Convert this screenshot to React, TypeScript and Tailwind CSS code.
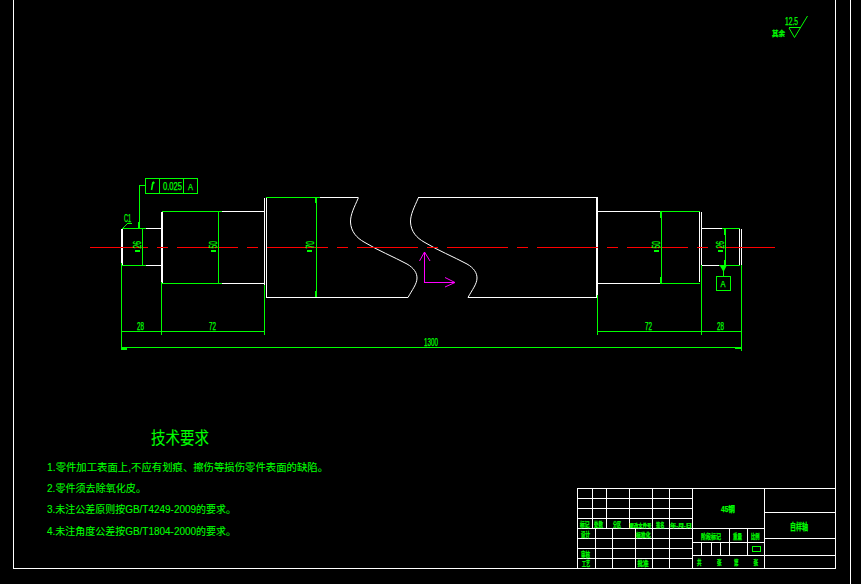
import React from "react";

const GREEN = "#00ff00";
const WHITE = "#ffffff";
const RED = "#ff0000";
const MAGENTA = "#ff00ff";

interface LabelProps {
  x: number;
  y: number;
  w: number;
  size?: number;
  bold?: boolean;
  thin?: boolean;
  rotate?: boolean;
  children: string;
}

// text squeezed to the width it has in the drawing
const Label: React.FC<LabelProps> = ({ x, y, w, size = 9, bold, thin, rotate, children }) => (
  <text
    x={rotate ? 0 : x}
    y={rotate ? 0 : y}
    transform={rotate ? `translate(${x} ${y}) rotate(-90)` : undefined}
    fill={GREEN}
    stroke={GREEN}
    strokeWidth={thin ? 0.08 : 0.25}
    fontSize={size}
    textLength={w}
    lengthAdjust="spacingAndGlyphs"
    className={`font-['Liberation_Sans','Noto_Sans_CJK_SC',sans-serif] ${bold ? "font-bold" : "font-normal"}`}
  >
    {children}
  </text>
);

const redDashes = [
  [90, 148], [157, 168], [177, 238], [247, 258], [267, 328], [337, 348], [357, 418],
  [427, 438], [447, 508], [517, 528], [537, 598], [607, 618], [627, 688], [697, 708], [717, 775],
];

const thick = [
  [121, 229, 2, 36], [161, 212, 2, 72], [596, 197, 2, 101],
];

const arrows = [
  [138, 222, 2, 7], [315, 198, 2, 5], [315, 291, 2, 6], [660, 212, 2, 6], [660, 277, 2, 6],
  [724, 228, 2, 7], [724, 260, 2, 5], [122, 348, 5, 2], [735, 347, 6, 2],
  [135, 250, 5, 2], [211, 250, 5, 2], [307, 250, 5, 2], [654, 250, 5, 2], [718, 250, 5, 2],
];

const titleSmall: [number, number, number, number, string][] = [
  [580, 526.5, 9.5, 6.5, "标记"], [594, 526.5, 9, 6.5, "处数"], [613, 526.5, 8, 6.5, "分区"],
  [629.5, 526.5, 22, 4.5, "更改文件号"], [656, 526.5, 8.5, 6, "签名"], [670, 526.5, 22, 5, "年.月.日"],
  [581, 536.5, 9, 6.5, "设计"], [636, 536.5, 14.5, 6, "标准化"], [581, 556.5, 9, 6.5, "审核"],
  [582, 566, 8, 6.5, "工艺"], [637.5, 566, 11, 6.5, "批准"], [701, 538.5, 20, 6.5, "阶段标记"],
  [733, 538.5, 9, 6.5, "重量"], [751, 538.5, 8.5, 6.5, "比例"], [697, 564.5, 4.5, 6.5, "共"],
  [717, 564.5, 4.5, 6.5, "张"], [734, 564.5, 4.5, 6.5, "第"], [753.5, 564.5, 4.5, 6.5, "张"],
];

const App: React.FC = () => {
  return (
    <div className="w-[861px] h-[584px] bg-black overflow-hidden">
      <svg width="861" height="584" viewBox="0 0 861 584" className="block">
        {/* sheet border */}
        <path d="M13.5 0V568.5H835.5V0M850.5 0V584" stroke={WHITE} fill="none" shapeRendering="crispEdges" />

        {/* shaft outline */}
        <g stroke={WHITE} fill="none" shapeRendering="crispEdges">
          <path d="M146 228.5H162M146 265.5H162" />
          <path d="M222 211.5H265M222 283.5H265" />
          <path d="M264.5 198V285M266.5 198V297" />
          <path d="M320 197.5H358M266 297.5H408M418 197.5H597M468 297.5H597" />
          <path d="M597 211.5H660M597 283.5H660M699.5 212V282M701.5 212V265" />
          <path d="M702 228.5H722M702 265.5H719M739.5 229V265M741.5 229V265" />
        </g>
        {thick.map(([x, y, w, h], i) => (
          <rect key={i} x={x} y={y} width={w} height={h} fill={WHITE} shapeRendering="crispEdges" />
        ))}

        {/* break lines */}
        <g stroke={WHITE} fill="none">
          <path d="M358.5 197.5C354 208 350.5 214 350.5 222C351 232 357 238 364 242C377 250 394 257 407 264C414 268 417 273 417 278C417 284 412 290 408 297.5" />
          <path d="M418.5 197.5C414 208 410.5 214 410.5 222C411 232 417 238 424 242C437 250 454 257 467 264C474 268 477 273 477 278C477 284 472 290 468 297.5" />
        </g>

        {/* center line */}
        {redDashes.map(([a, b]) => (
          <line key={a} x1={a} x2={b} y1={247.5} y2={247.5} stroke={RED} shapeRendering="crispEdges" />
        ))}

        {/* ucs icon */}
        <g stroke={MAGENTA} fill="none">
          <path d="M424.5 252V282.5H455" shapeRendering="crispEdges" />
          <path d="M419.5 261L424.5 252L430 261M445 277.5L455 282.5L445 287" />
        </g>

        {/* dimensions */}
        <g stroke={GREEN} fill="none" shapeRendering="crispEdges">
          <path d="M122 228.5H146M122 265.5H146M142.5 229V265" />
          <path d="M162 211.5H222M162 283.5H222M218.5 212V283" />
          <path d="M266 197.5H320M316.5 198V297" />
          <path d="M660 211.5H700M660 283.5H700M661.5 212V283" />
          <path d="M722 228.5H740M719 265.5H740M725.5 229V265" />
          <path d="M121.5 263V350M161.5 282V335M264.5 285V335M597.5 295V335M701.5 265V335M741.5 265V351" />
          <path d="M122 331.5H265M597 331.5H741M122 347.5H741" />
          <path d="M145.5 178.5H197.5V193.5H145.5ZM159.5 179V193M183.5 179V193M139.5 229V185.5H145" />
          <path d="M716.5 276.5H730.5V290.5H716.5ZM723.5 271V276" />
          <path d="M127 223.5H132" />
          <path d="M752.5 546.5H760.5V551.5H752.5Z" />
        </g>
        <path d="M122.5 228.5L127.5 223.5" stroke={GREEN} fill="none" />
        <path d="M719.5 265H727L723.5 272Z" fill={GREEN} />
        <path d="M151.5 190L153 182" stroke={GREEN} strokeWidth={1.5} fill="none" />
        <path d="M151.5 185L153.5 181L155 183Z" fill={GREEN} />
        {arrows.map(([x, y, w, h], i) => (
          <rect key={i} x={x} y={y} width={w} height={h} fill={GREEN} shapeRendering="crispEdges" />
        ))}

        <Label x={124} y={222} w={7} size={10}>C1</Label>
        <Label x={163} y={189.5} w={19} size={10}>0.025</Label>
        <Label x={188} y={189.5} w={5} size={9}>A</Label>
        <Label x={720.5} y={287} w={5} size={9}>A</Label>
        <Label x={137} y={330} w={7} size={10}>28</Label>
        <Label x={209} y={330} w={7} size={10}>72</Label>
        <Label x={645} y={330} w={7} size={10}>72</Label>
        <Label x={717} y={330} w={7} size={10}>28</Label>
        <Label x={424} y={346} w={14} size={10}>1300</Label>
        <Label x={141} y={248.5} w={7.5} size={10} rotate>26</Label>
        <Label x={217} y={248.5} w={7.5} size={10} rotate>50</Label>
        <Label x={314} y={248.5} w={7.5} size={10} rotate>70</Label>
        <Label x={660} y={248.5} w={7.5} size={10} rotate>50</Label>
        <Label x={724} y={248.5} w={7.5} size={10} rotate>26</Label>

        {/* surface finish mark */}
        <Label x={785} y={25} w={13} size={10}>12.5</Label>
        <Label x={772} y={36} w={13} size={7} bold>其余</Label>
        <path d="M788.5 27.5H800.5" stroke={GREEN} shapeRendering="crispEdges" />
        <path d="M789 28L794.5 37.5L807.5 16" stroke={GREEN} fill="none" />

        {/* technical notes */}
        <Label x={151} y={444} w={58} size={17} thin>技术要求</Label>
        <Label x={47} y={471} w={281} size={10} thin>1.零件加工表面上,不应有划痕、擦伤等损伤零件表面的缺陷。</Label>
        <Label x={47} y={492} w={99} size={10} thin>2.零件须去除氧化皮。</Label>
        <Label x={47} y={513} w={189} size={10} thin>3.未注公差原则按GB/T4249-2009的要求。</Label>
        <Label x={47} y={535} w={189} size={10} thin>4.未注角度公差按GB/T1804-2000的要求。</Label>

        {/* title block */}
        <g stroke={WHITE} fill="none" shapeRendering="crispEdges">
          <path d="M577.5 568.5V488.5H835.5" />
          <path d="M577.5 498.5H692M577.5 508.5H692M577.5 518.5H692M577.5 528.5H764M577.5 538.5H692M577.5 548.5H692M577.5 558.5H692" />
          <path d="M592.5 489V528M606.5 489V528M629.5 489V528M652.5 489V568M669.5 489V568M692.5 489V568" />
          <path d="M595.5 529V568M612.5 529V568M635.5 529V568" />
          <path d="M764.5 489V568M764.5 512.5H835M764.5 538.5H835M764.5 555.5H835" />
          <path d="M692.5 542.5H764M692.5 555.5H764M729.5 529V555M747.5 529V555M701.5 543V555M711.5 543V555M720.5 543V555" />
        </g>
        {titleSmall.map(([x, y, w, size, s]) => (
          <Label key={`${x}-${y}`} x={x} y={y} w={w} size={size} bold>{s}</Label>
        ))}
        <Label x={721} y={512} w={14} size={8.5} bold>45钢</Label>
        <Label x={790} y={530} w={18} size={9} bold>自样轴</Label>
      </svg>
    </div>
  );
};

export default App;
